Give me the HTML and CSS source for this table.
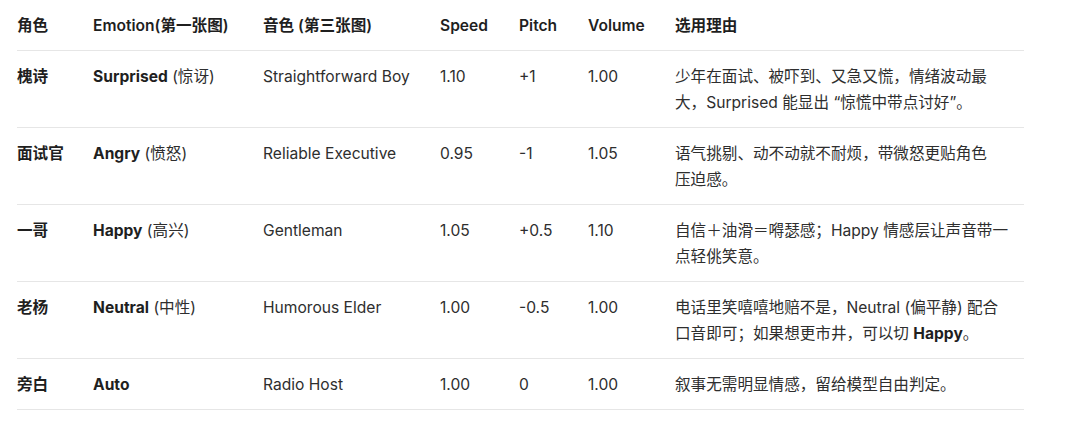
FILE: index.html
```html
<!DOCTYPE html>
<html lang="zh-CN">
<head>
<meta charset="utf-8">
<title>角色配音参数</title>
<link rel="stylesheet" href="styles.css">
</head>
<body>
<table class="voice-table">
  <colgroup>
    <col class="c-role">
    <col class="c-emotion">
    <col class="c-timbre">
    <col class="c-speed">
    <col class="c-pitch">
    <col class="c-volume">
    <col class="c-reason">
  </colgroup>
  <thead>
    <tr>
      <th>角色</th>
      <th>Emotion(第一张图)</th>
      <th>音色 (第三张图)</th>
      <th>Speed</th>
      <th>Pitch</th>
      <th>Volume</th>
      <th>选用理由</th>
    </tr>
  </thead>
  <tbody>
    <tr>
      <td class="role">槐诗</td>
      <td><b>Surprised</b> (惊讶)</td>
      <td>Straightforward Boy</td>
      <td>1.10</td>
      <td>+1</td>
      <td>1.00</td>
      <td>少年在面试、被吓到、又急又慌，情绪波动最<br>大，Surprised 能显出 “惊慌中带点讨好”。</td>
    </tr>
    <tr>
      <td class="role">面试官</td>
      <td><b>Angry</b> (愤怒)</td>
      <td>Reliable Executive</td>
      <td>0.95</td>
      <td>-1</td>
      <td>1.05</td>
      <td>语气挑剔、动不动就不耐烦，带微怒更贴角色<br>压迫感。</td>
    </tr>
    <tr>
      <td class="role">一哥</td>
      <td><b>Happy</b> (高兴)</td>
      <td>Gentleman</td>
      <td>1.05</td>
      <td>+0.5</td>
      <td>1.10</td>
      <td>自信＋油滑＝嘚瑟感；Happy 情感层让声音带一<br>点轻佻笑意。</td>
    </tr>
    <tr>
      <td class="role">老杨</td>
      <td><b>Neutral</b> (中性)</td>
      <td>Humorous Elder</td>
      <td>1.00</td>
      <td>-0.5</td>
      <td>1.00</td>
      <td>电话里笑嘻嘻地赔不是，Neutral (偏平静) 配合<br>口音即可；如果想更市井，可以切 <b>Happy</b>。</td>
    </tr>
    <tr>
      <td class="role">旁白</td>
      <td><b>Auto</b></td>
      <td>Radio Host</td>
      <td>1.00</td>
      <td>0</td>
      <td>1.00</td>
      <td>叙事无需明显情感，留给模型自由判定。</td>
    </tr>
  </tbody>
</table>
</body>
</html>
```

FILE: styles.css
```css
html, body {
  margin: 0;
  padding: 0;
  background: #ffffff;
}

body {
  padding: 0 56px 0 17px;
  font-family: "Inter", "Noto Sans CJK SC", sans-serif;
  font-size: 15.6px;
  color: #2e2e2e;
}

.voice-table {
  width: 1007px;
  border-collapse: collapse;
  table-layout: fixed;
}

.c-role { width: 76px; }
.c-emotion { width: 170px; }
.c-timbre { width: 177px; }
.c-speed { width: 79px; }
.c-pitch { width: 69px; }
.c-volume { width: 87px; }
.c-reason { width: 349px; }

.voice-table th,
.voice-table td {
  text-align: left;
  vertical-align: top;
  padding: 13px 8px 11px 0;
  line-height: 26px;
  border-bottom: 1px solid #e6e6e6;
  white-space: nowrap;
}

.voice-table th {
  font-weight: 600;
  color: #1f1f1f;
}

.voice-table td b,
.voice-table td.role {
  font-weight: 700;
  color: #1f1f1f;
}
```
